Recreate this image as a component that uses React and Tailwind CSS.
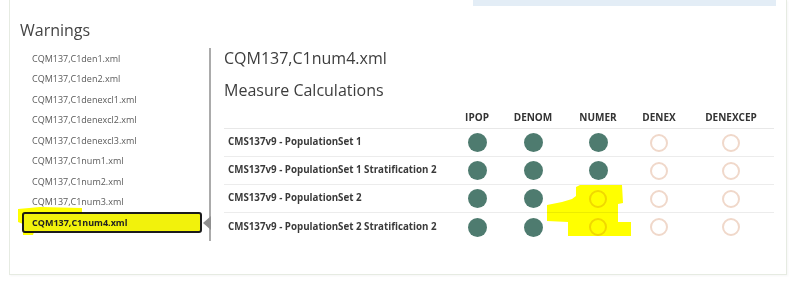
import React from 'react';

const files = [
    'CQM137,C1den1.xml',
    'CQM137,C1den2.xml',
    'CQM137,C1denexcl1.xml',
    'CQM137,C1denexcl2.xml',
    'CQM137,C1denexcl3.xml',
    'CQM137,C1num1.xml',
    'CQM137,C1num2.xml',
    'CQM137,C1num3.xml',
    'CQM137,C1num4.xml',
];

const columns = ['IPOP', 'DENOM', 'NUMER', 'DENEX', 'DENEXCEP'];

// 1 = met, 0 = not met
const rows = [
    { name: 'CMS137v9 - PopulationSet 1', values: [1, 1, 1, 0, 0] },
    { name: 'CMS137v9 - PopulationSet 1 Stratification 2', values: [1, 1, 1, 0, 0] },
    { name: 'CMS137v9 - PopulationSet 2', values: [1, 1, 0, 0, 0] },
    { name: 'CMS137v9 - PopulationSet 2 Stratification 2', values: [1, 1, 0, 0, 0] },
];

const gridCols = 'grid grid-cols-[226px_54px_58px_72px_50px_94px]';

function Dot({ filled }) {
    if (filled) {
        return <div className="w-[19px] h-[19px] rounded-full bg-[#4e7b6f]" />;
    }
    return <div className="w-[18px] h-[18px] rounded-full border-2 border-[#f0d8ca]" />;
}

export default function App() {
    return (
        <div className="relative w-[800px] h-[285px] bg-white overflow-hidden" style={{ fontFamily: '"Open Sans", "Liberation Sans", sans-serif' }}>
            <div className="ml-[9px] w-[778px] h-[275px] border-l border-r border-b border-[#e6ebe2] shadow-[1px_1px_2px_rgba(0,0,0,0.04)]">
                {/* tail of the info box above */}
                <div className="ml-[463px] w-[303px] h-[6px] bg-[#e3edf6]" />

                <h2 className="mt-[12px] ml-[10px] text-[16px] leading-[24px] text-[#444]">Warnings</h2>

                <div className="mt-[6px] flex">
                    {/* file list */}
                    <div className="ml-[12px] w-[189px] border-r-2 border-[#ababab]">
                        <ul className="w-[180px]">
                            {files.map((f, i) => {
                                const selected = i === files.length - 1;
                                return (
                                    <li
                                        key={f}
                                        className={
                                            selected
                                                ? 'relative h-[20.5px] pl-[8px] flex items-center rounded-[3px] border-2 border-[#1b1b1b] bg-[#f2f20c] text-[9px] font-bold text-[#222]'
                                                : 'h-[20.5px] pl-[10px] flex items-center text-[9px] text-[#5a5a5a]'
                                        }
                                    >
                                        {f}
                                        {selected && (
                                            <span className="absolute left-[179px] top-[2px] w-0 h-0 border-y-[7px] border-y-transparent border-r-[8px] border-r-[#8f8f8f]" />
                                        )}
                                    </li>
                                );
                            })}
                        </ul>
                    </div>

                    {/* details */}
                    <div className="pl-[13px]">
                        <h3 className="text-[16px] leading-[20px] text-[#3d3d3d]">CQM137,C1num4.xml</h3>
                        <h3 className="mt-[10px] text-[16px] leading-[24px] text-[#3d3d3d]">Measure Calculations</h3>

                        <div className="mt-[5px] w-[550px]">
                            <div className={`${gridCols} h-[22px] items-center border-b border-[#e8e8e8] text-[10px] font-bold text-[#333]`}>
                                <div />
                                {columns.map((c) => (
                                    <div key={c} className="text-center">{c}</div>
                                ))}
                            </div>
                            {rows.map((r, i) => (
                                <div
                                    key={r.name}
                                    className={`${gridCols} h-[28px] items-center ${i < rows.length - 1 ? 'border-b border-[#ececec]' : ''}`}
                                >
                                    <div className="pl-[4px] text-[9.75px] font-bold text-[#3a3a3a] whitespace-nowrap">{r.name}</div>
                                    {r.values.map((v, j) => (
                                        <div key={j} className="flex justify-center">
                                            <Dot filled={v === 1} />
                                        </div>
                                    ))}
                                </div>
                            ))}
                        </div>
                    </div>
                </div>
            </div>

            {/* highlighter marks drawn over the screenshot */}
            <svg className="absolute left-0 top-0 pointer-events-none mix-blend-multiply" width="800" height="285">
                <polygon
                    fill="#ffff00"
                    points="576,187 580,185 622,185 623,203 618,204 618,222 631,222 631,236 568,236 568,222 547,221 547,205 562,202 572,199 576,196"
                />
                <polygon fill="#ffff00" points="18,209 40,207 82,208 82,213 23,213 23,224 18,222" />
                <polygon fill="#ffff00" points="23,232 34,232 33,235 23,235" />
            </svg>
        </div>
    );
}
